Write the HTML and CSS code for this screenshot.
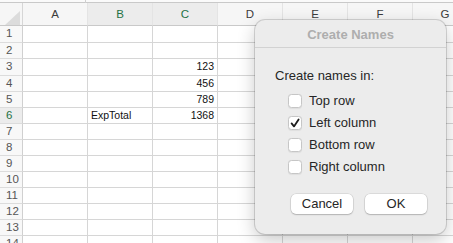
FILE: index.html
```html
<!DOCTYPE html>
<html>
<head>
<meta charset="utf-8">
<link rel="stylesheet" href="styles.css">
</head>
<body>
<div class="page">
  <div class="topstrip"><span class="tick"></span></div>
  <div class="sheet">
    <div class="corner"><span class="tri"></span></div>
    <div class="ch">A</div><div class="ch sel">B</div><div class="ch sel">C</div><div class="ch">D</div><div class="ch">E</div><div class="ch">F</div><div class="ch">G</div>

    <div class="rh">1</div><div class="c"></div><div class="c"></div><div class="c"></div><div class="c"></div><div class="c"></div><div class="c"></div><div class="c"></div>
    <div class="rh">2</div><div class="c"></div><div class="c"></div><div class="c"></div><div class="c"></div><div class="c"></div><div class="c"></div><div class="c"></div>
    <div class="rh">3</div><div class="c"></div><div class="c"></div><div class="c num">123</div><div class="c"></div><div class="c"></div><div class="c"></div><div class="c"></div>
    <div class="rh">4</div><div class="c"></div><div class="c"></div><div class="c num">456</div><div class="c"></div><div class="c"></div><div class="c"></div><div class="c"></div>
    <div class="rh">5</div><div class="c"></div><div class="c"></div><div class="c num">789</div><div class="c"></div><div class="c"></div><div class="c"></div><div class="c"></div>
    <div class="rh sel">6</div><div class="c"></div><div class="c">ExpTotal</div><div class="c num">1368</div><div class="c"></div><div class="c"></div><div class="c"></div><div class="c"></div>
    <div class="rh">7</div><div class="c"></div><div class="c"></div><div class="c"></div><div class="c"></div><div class="c"></div><div class="c"></div><div class="c"></div>
    <div class="rh">8</div><div class="c"></div><div class="c"></div><div class="c"></div><div class="c"></div><div class="c"></div><div class="c"></div><div class="c"></div>
    <div class="rh">9</div><div class="c"></div><div class="c"></div><div class="c"></div><div class="c"></div><div class="c"></div><div class="c"></div><div class="c"></div>
    <div class="rh">10</div><div class="c"></div><div class="c"></div><div class="c"></div><div class="c"></div><div class="c"></div><div class="c"></div><div class="c"></div>
    <div class="rh">11</div><div class="c"></div><div class="c"></div><div class="c"></div><div class="c"></div><div class="c"></div><div class="c"></div><div class="c"></div>
    <div class="rh">12</div><div class="c"></div><div class="c"></div><div class="c"></div><div class="c"></div><div class="c"></div><div class="c"></div><div class="c"></div>
    <div class="rh">13</div><div class="c"></div><div class="c"></div><div class="c"></div><div class="c"></div><div class="c"></div><div class="c"></div><div class="c"></div>
    <div class="rh">14</div><div class="c"></div><div class="c"></div><div class="c"></div><div class="c"></div><div class="c"></div><div class="c"></div><div class="c"></div>
  </div>

  <div class="dialog">
    <div class="dtitle">Create Names</div>
    <div class="dbody">
      <div class="prompt">Create names in:</div>
      <div class="opts">
        <label class="opt"><span class="box"></span><span>Top row</span></label>
        <label class="opt"><span class="box"><svg width="14" height="14" viewBox="0 0 14 14"><path d="M3.6 7.4 L6 10.4 L10.6 3.4" fill="none" stroke="#1d1d1d" stroke-width="1.8" stroke-linecap="round" stroke-linejoin="round"/></svg></span><span>Left column</span></label>
        <label class="opt"><span class="box"></span><span>Bottom row</span></label>
        <label class="opt"><span class="box"></span><span>Right column</span></label>
      </div>
      <div class="buttons">
        <span class="btn">Cancel</span>
        <span class="btn">OK</span>
      </div>
    </div>
  </div>
</div>
</body>
</html>
```

FILE: styles.css
```css
html, body {
  margin: 0;
  padding: 0;
  background: #ffffff;
  overflow: hidden;
}
.page {
  position: relative;
  width: 453px;
  height: 243px;
  overflow: hidden;
  font-family: "Liberation Sans", Arial, sans-serif;
}
.topstrip {
  position: relative;
  height: 2px;
  border-bottom: 1px solid #c9c9c9;
  background: #fafafa;
}
.tick {
  position: absolute;
  left: 85px;
  top: 0;
  width: 1px;
  height: 3px;
  background: #cfcfcf;
}
.sheet {
  display: grid;
  grid-template-columns: 23px repeat(7, 65px);
  grid-template-rows: 23px 17px 16px 17px 16px 16px 16px 16px 16px 16px 16px 16px 16px 16px 16px;
  width: 478px;
}
.sheet > div {
  box-sizing: border-box;
  border-right: 1px solid #d6d6d6;
  border-bottom: 1px solid #d6d6d6;
  font-size: 10.5px;
  line-height: 15px;
  color: #111;
  white-space: nowrap;
  overflow: hidden;
}
.corner {
  position: relative;
  background: #f6f6f6;
  border-bottom-color: #c9c9c9 !important;
}
.tri {
  position: absolute;
  left: 5px;
  top: 8px;
  width: 0;
  height: 0;
  border-left: 15px solid transparent;
  border-bottom: 14px solid #dcdcdc;
}
.sheet > .ch {
  background: #f6f6f6;
  text-align: center;
  font-size: 11.5px;
  line-height: 22px;
  color: #3c3c3c;
  border-right-color: #e4e4e4;
  border-bottom-color: #c9c9c9;
}
.sheet > .ch.sel {
  background: #ececec;
  color: #1f7244;
}
.sheet > .rh {
  background: #f8f8f8;
  font-size: 11.5px;
  padding-left: 6px;
  color: #555;
  border-right-color: #d0d0d0;
  border-bottom-color: #dcdcdc;
}
.sheet > .rh.sel {
  background: #ececec;
  color: #1f7244;
}
.sheet > .c {
  padding: 0 3px;
}
.sheet > .num {
  text-align: right;
  padding-right: 3px;
}

.dialog {
  position: absolute;
  left: 255px;
  top: 20px;
  width: 191px;
  height: 214px;
  box-sizing: border-box;
  background: #ececec;
  border-radius: 10px;
  box-shadow: 0 0 0 1px rgba(0,0,0,0.14), 0 6px 18px rgba(0,0,0,0.22);
  font-family: "Liberation Sans", Arial, sans-serif;
  color: #262626;
  display: flex;
  flex-direction: column;
}
.dtitle {
  height: 28px;
  box-sizing: border-box;
  border-bottom: 1px solid #d2d2d2;
  text-align: center;
  font-size: 13px;
  font-weight: bold;
  line-height: 29px;
  color: #aeaeae;
}
.dbody {
  padding: 20px 19px 0 20px;
  display: flex;
  flex-direction: column;
}
.prompt {
  font-size: 13px;
  line-height: 16px;
}
.opts {
  display: flex;
  flex-direction: column;
  gap: 6px;
  padding-left: 13px;
  margin-top: 9px;
}
.opt {
  display: flex;
  align-items: center;
  gap: 7px;
  height: 16px;
  font-size: 13px;
  line-height: 16px;
}
.box {
  width: 14px;
  height: 14px;
  box-sizing: border-box;
  border: 1px solid #c6c6c6;
  border-radius: 3.5px;
  background: #ffffff;
  box-shadow: 0 0.5px 1px rgba(0,0,0,0.06);
  display: flex;
  align-items: center;
  justify-content: center;
  flex: none;
}
.box svg {
  display: block;
  margin: -1px;
}
.buttons {
  display: flex;
  justify-content: flex-end;
  gap: 12px;
  margin-top: 19px;
}
.btn {
  width: 62px;
  height: 20px;
  box-sizing: border-box;
  background: #ffffff;
  border-radius: 5px;
  box-shadow: 0 0 0 0.5px rgba(0,0,0,0.14), 0 1px 1.5px rgba(0,0,0,0.18);
  text-align: center;
  font-size: 13px;
  line-height: 20px;
  color: #262626;
}
```
